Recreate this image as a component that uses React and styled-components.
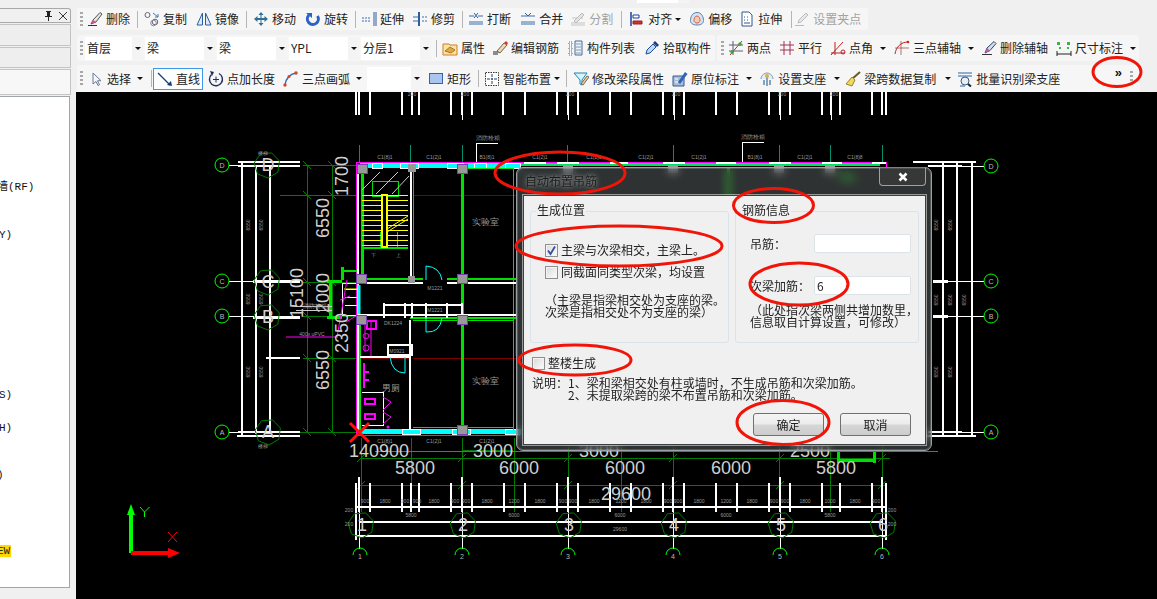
import React from 'react';
import styled, { createGlobalStyle } from 'styled-components';

const Global = createGlobalStyle`
  html, body { margin: 0; padding: 0; background: #f0f0f0; overflow: hidden; }
  * { box-sizing: border-box; }
`;
const FONT = `"Noto Sans CJK SC", "Liberation Sans", sans-serif`;

const Page = styled.div`
  position: relative; width: 1157px; height: 599px; display: flex; overflow: hidden;
  background: #f0f0f0; font: 12px/14px ${FONT}; color: #222;
`;

/* ---------- sidebar ---------- */
const Sidebar = styled.aside`
  width: 76px; flex: none; padding-top: 8px; display: flex; flex-direction: column;
`;
const PanelHeader = styled.div`
  width: 71px; height: 15px; border: 1px solid #a9a9a9; border-left: 0; border-radius: 0 3px 0 0;
  background: #f0f0f0; display: flex; align-items: center; justify-content: flex-end; gap: 6px; padding-right: 3px;
`;
const SideTab = styled.div`
  width: 71px; height: ${p => p.$h}px; margin-top: 1px; border: 1px solid #c4c4c4; border-left: 0;
  background: ${p => p.$light ? '#f7f7f7' : '#eeeeee'};
`;
const TreePanel = styled.div`
  width: 70px; flex: 1; margin-top: 1px; background: #fff; border: 1px solid #a0a5aa; border-left: 0; overflow: hidden;
`;
const TreeRow = styled.div`
  height: 16px; line-height: 16px; white-space: nowrap; margin-top: ${p => p.$gap}px; margin-left: ${p => p.$x}px;
  font: 11px/16px "Liberation Mono", "Noto Sans CJK SC", monospace; color: #111;
`;
const Mark = styled.span`background: #ffd800; color: #222; padding: 0 1px 0 0;`;
const SideFoot = styled.div`height: 11px; width: 71px;`;

/* ---------- toolbars ---------- */
const Main = styled.main`flex: 1; min-width: 0; display: flex; flex-direction: column;`;
const Toolbars = styled.div`height: 92px; flex: none; padding-left: 1px;`;
const TopStrip = styled.div`height: 8px; display: flex; padding-left: 560px;`;
const Stub = styled.div`width: 52px; height: 3px; background: #fff; border-right: 11px solid #f4f4f4;`;
const Line = styled.div`display: flex; gap: 2px; height: ${p => p.$h}px; margin-top: ${p => p.$t}px;`;
const Bar = styled.div`
  width: ${p => p.$w}px; height: 100%; flex: none; display: flex; align-items: center;
  background: #f6f6f6; border-radius: 3px; white-space: nowrap;
`;
const Grip = styled.i`
  display: block; flex: none; width: 3px; height: 15px; margin-left: ${p => p.$ml ?? 3}px;
  background: repeating-linear-gradient(to bottom, #a8a8a8 0 2px, transparent 2px 4px);
`;
const Tool = styled.div`
  display: flex; align-items: center; flex: none; gap: 3px; height: 22px;
  padding: 0 ${p => p.$active ? 3 : 5}px 0 4px; margin-left: ${p => p.$ml || 0}px;
  color: ${p => p.$off ? '#a2a2a2' : '#222'};
  ${p => p.$active && `background:#fbfdff; box-shadow: inset 0 0 0 1px #3e97ea;`}
`;
const Caret = styled.i`
  display: block; flex: none; width: 0; height: 0; margin-left: ${p => p.$cl || 0}px;
  border: 3px solid transparent; border-top: 3px solid #111; border-bottom: 0;
`;
const Sep = styled.i`
  display: block; flex: none; width: 1px; height: 17px; background: #b5b5b5;
  margin: 0 ${p => p.$mr ?? 2}px 0 ${p => p.$ml ?? 2}px;
`;
const Combo = styled.div`
  display: flex; align-items: center; justify-content: space-between; flex: none;
  width: ${p => p.$w}px; height: 23px; margin-left: ${p => p.$ml ?? 2}px; background: #fff; padding-left: 2px;
`;
const ComboArrow = styled.span`
  width: 11px; height: 100%; background: #f4f4f4; display: flex; align-items: center; justify-content: center;
`;
const More = styled.div`
  margin-left: auto; margin-right: 7px; display: flex; align-items: center; gap: 8px; height: 100%;
  font: bold 13px/13px "Liberation Sans", sans-serif; color: #111;
`;
const MoreGlyph = styled.span`margin-top: -13px;`;

/* ---------- canvas and dialog ---------- */
const Canvas = styled.div`position: relative; flex: 1; background: #000; overflow: hidden;`;
const CadSvg = styled.svg`display: block; width: 100%; height: 100%;`;

const Dialog = styled.section`
  position: absolute; left: 440px; top: 75px; width: 416px; height: 284px; padding: 0 5px 5px 6px;
  border: 1px solid #9aa1a5; border-radius: 7px;
  background: rgba(110, 120, 120, .42); backdrop-filter: blur(4px);
  box-shadow: inset 0 0 0 1px rgba(255,255,255,.18);
  display: flex; flex-direction: column;
`;
const TitleBar = styled.header`height: 27px; flex: none; display: flex; justify-content: space-between; padding-left: 2px;`;
const DialogTitle = styled.span`line-height: 26px; color: #1c1c1c; text-shadow: 0 0 6px rgba(255,255,255,.55), 0 0 3px rgba(255,255,255,.3);`;
const CloseBtn = styled.button`
  width: 47px; height: 19px; padding: 0; margin-top: -1px; border: 1px solid #9aa3a8; border-top-color: transparent;
  border-radius: 0 0 4px 4px; background: rgba(70,70,70,.35); display: flex; align-items: center; justify-content: center;
`;
const Client = styled.div`
  flex: 1; background: #f0f0f0; border: 1px solid #3c3f42; box-shadow: 0 0 0 1px rgba(255,255,255,.5);
  display: flex; flex-direction: column; color: #222;
`;
const Groups = styled.div`display: flex; gap: 6px; padding: 15px 0 0 6px;`;
const Group = styled.div`
  width: ${p => p.$w}px; height: 132px; border: 1px solid #dbe3ea; border-radius: 3px; flex: none;
`;
const GroupTitle = styled.div`
  width: fit-content; margin: -9px 0 0 5px; background: #f0f0f0; padding: 0 1px; font-size: 12px;
`;
const CheckRow = styled.label`
  display: flex; align-items: center; gap: 3px; height: 16px; padding-left: ${p => p.$l}px; margin-top: ${p => p.$t}px;
`;
const CheckBox = styled.span`
  width: 13px; height: 13px; flex: none; border: 1px solid #8e8f8f;
  background: linear-gradient(135deg, #d9d9d9, #fdfdfd); box-shadow: inset 0 0 0 1px #f4f4f4;
  display: flex; align-items: center; justify-content: center;
`;
const Note = styled.div`
  padding-left: ${p => p.$l}px; margin-top: ${p => p.$t}px; line-height: 12px; white-space: nowrap;
`;
const NoteLine = styled.div`padding-left: ${p => p.$l || 0}px;`;
const FieldRow = styled.div`
  display: flex; align-items: center; height: 19px; padding-left: 14px; margin-top: ${p => p.$t}px;
`;
const FieldLabel = styled.span`width: 64px; flex: none; white-space: nowrap;`;
const FieldInput = styled.input`
  width: 97px; height: 19px; flex: none; padding: 0 2px; border: 1px solid #dde4e8; border-radius: 2px; background: #fff;
  font: 12px ${FONT}; color: #222; outline: 0;
`;
const Buttons = styled.div`display: flex; justify-content: flex-end; gap: 16px; padding-right: 14px; margin-top: 12px;`;
const Btn = styled.button`
  width: 71px; height: 23px; padding: 0; border: 1px solid #707070; border-radius: 3px; color: #222;
  background: linear-gradient(#f4f4f4 0, #ececec 48%, #d6d6d6 52%, #cdcdcd 100%);
  font: 12px ${FONT};
`;
const Annotations = styled.svg`position: absolute; left: 0; top: 0; width: 1157px; height: 599px; pointer-events: none;`;

/* ---------- icons ---------- */
const icons = {
  del: <><path d="M1 14.5h9" stroke="#333" /><path d="M4 13 L6 9 L13 1.5 L15 3 L9 11z" fill="#e8e2d8" stroke="#555" /><path d="M4 13 L6 9 L9 11z" fill="#e24a9a" /></>,
  copy: <><circle cx="3.5" cy="4" r="2.5" fill="none" stroke="#667" /><circle cx="11" cy="11" r="2.8" fill="none" stroke="#667" /><circle cx="9.5" cy="12" r="2.8" fill="none" stroke="#889" /><path d="M9 2l5 4M14 3v3h-3" fill="none" stroke="#47a" /></>,
  mirror: <><path d="M1 14 L6.5 2v12z" fill="#dde9f6" stroke="#2b5f9c" /><path d="M15 14 L9.5 2v12z" fill="#dde9f6" stroke="#2b5f9c" /></>,
  move: <path d="M8 1l2.5 3h-2v3h3v-2L15 8l-3.500 3V9h-3v3h2L8 15l-2.500-3h2V9h-3v2L1 8l3.500-3v2h3V4h-2z" fill="#2e6f96" />,
  rotate: <><path d="M12.500 5A5.500 5.500 0 1 1 4 4" fill="none" stroke="#2a62c8" strokeWidth="3" /><path d="M1 2h6v5z" fill="#2a62c8" /></>,
  extend: <><path d="M1 7h9M1 10h9" stroke="#3a6fb0" strokeDasharray="2 1" /><path d="M13 1v14M15 1v14" stroke="#2f5f9a" /></>,
  trim: <><path d="M1 6h6M1 10h6" stroke="#3a6fb0" /><path d="M7 1v14" stroke="#2f5f9a" strokeWidth="2" /><path d="M10 6h5M10 10h5" stroke="#3a6fb0" strokeDasharray="2 1" /></>,
  brk: <><path d="M1 5h5M10 5h5M1 11h14M1 13h14" stroke="#3a6fb0" /><path d="M6 2l4 5M10 2L6 7" stroke="#2f5f9a" /></>,
  merge: <><path d="M1 5h14M1 11h14M1 13h14" stroke="#3a6fb0" /><path d="M5 2l3 3 3-3" fill="none" stroke="#2f5f9a" /></>,
  split: <><path d="M1 12h14M1 14h14M2 7h11" stroke="#c4c4c4" /><path d="M4 10l8-8 2 2-8 8z" fill="#e4e4e4" stroke="#bbb" /></>,
  align: <><path d="M2 1v14" stroke="#1a3f9c" strokeWidth="1.500" /><path d="M4 4h6v3H4z" fill="#fff" stroke="#1a3f9c" /><path d="M4 10h9v3H4z" fill="#c33" stroke="#922" /></>,
  offset: <><path d="M8 1.500c5 0 6.500 5 6.500 8 0 3-2.500 4.500-6.500 4.500s-6.500-1.500-6.500-4.500c0-3 1.500-8 6.500-8z" fill="#d6e4f2" stroke="#5a7ea8" /><path d="M8 5c2.500 0 3 3 3 4.500S9.500 12 8 12s-3-1-3-2.500S5.500 5 8 5z" fill="#f6c8b8" stroke="#c64" /></>,
  stretch: <><path d="M3 1h7l3 3v11H3z" fill="#fff" stroke="#35578f" /><path d="M5 6h1M8 6h1M5 9h1M8 9h1M5 12h6" stroke="#35578f" /></>,
  grip: <><path d="M1 14.500h9" stroke="#bbb" /><path d="M4 12l1-3 7-7 2 2-7 7z" fill="#e8e8e8" stroke="#bbb" /></>,
  attr: <><path d="M1 4h6l1 1h7v10H1z" fill="#fbe3a8" stroke="#d77a1e" /><path d="M3 11l5-4 5 3-4 3z" fill="#d9a94a" stroke="#a87a20" /></>,
  edit: <><path d="M1 12h7" stroke="#222" /><path d="M1 14h5" stroke="#222" /><path d="M5 11L12 3l3 2-7 8z" fill="#f0d8b0" stroke="#665" /><path d="M12 3l3 2 1-2-2-2z" fill="#d33" /></>,
  list: <><path d="M1 2h3v3H1zM1 7h3v3H1zM1 12h3v3H1z" fill="#fff" stroke="#566" strokeDasharray="1 1" /><path d="M7 1h7v14H7z" fill="#eef3fa" stroke="#4a6a92" /><path d="M8 4h5M8 7h5M8 10h5M8 13h5" stroke="#7f9ab8" /></>,
  pick: <><path d="M2 14l1-4 6-6 3 3-6 6z" fill="#bcd8f4" stroke="#1a4fa0" /><path d="M9 3l2-2 4 4-2 2z" fill="#1a3f8c" /></>,
  two: <><path d="M1 5h14M1 11h14M5 1v14" stroke="#5b5b78" /><path d="M2 15L14 1" stroke="#b03030" /><circle cx="4" cy="12" r="1.700" fill="#3a3" /><circle cx="12" cy="4" r="1.700" fill="#3a3" /></>,
  par: <path d="M1 5h14M1 10h14M5 1v14M11 1v14" stroke="#a03050" />,
  ang: <><path d="M1 13h14M5 2v13M1 15L13 2" stroke="#c02020" /><circle cx="13" cy="12" r="2" fill="none" stroke="#c02020" /></>,
  tri: <><path d="M1 14C2 7 7 2 14 2" fill="none" stroke="#c02020" /><path d="M7 1v14M1 8h14" stroke="#9a3a3a" strokeWidth=".700" /><circle cx="14" cy="2" r="1.300" fill="#c22" /></>,
  delx: <><path d="M1 14.500h10" stroke="#333" /><path d="M4 13l2-5 7-6.500 2 2-6 7z" fill="#cfdff0" stroke="#345" /><path d="M4 13l2-5 3 2.500z" fill="#c85bb0" /></>,
  dim: <><path d="M1 2h3v3H1zM11 2h3v3h-3z" fill="#3bb24a" /><path d="M1 14h14M1 11v5M15 11v5" stroke="#222" /><path d="M3 8h2M11 8h2" stroke="#3bb24a" strokeWidth="2" /></>,
  sel: <path d="M5 2v11l3-2.500 2 4 1.500-.8-2-4H13z" fill="#f4f6fa" stroke="#6b7b90" />,
  line: <><path d="M1 2l12 12" stroke="#143a7a" strokeWidth="1.300" /><path d="M15 15l-5-1 4-4z" fill="#143a7a" /></>,
  plen: <><path d="M11 2.500A6.500 6.500 0 1 1 3.500 3.500" fill="none" stroke="#1a2f5c" strokeWidth="1.400" /><path d="M2 0l4 1-2 4z" fill="#1a2f5c" /><path d="M8 5.500v6M5 8.500h6" stroke="#1a2f5c" /></>,
  arc: <><path d="M2 14C3 7 7 3 13 2" fill="none" stroke="#2a6ab0" strokeWidth="1.300" /><circle cx="2" cy="14" r="1.700" fill="#d8442c" /><circle cx="6" cy="5.500" r="1.500" fill="#d8442c" /><circle cx="13" cy="2" r="1.700" fill="#d8442c" /></>,
  rect: <rect x="1.500" y="2.500" width="13" height="10" fill="#a8c6f0" stroke="#3a62a8" />,
  smart: <><path d="M1.500 1.500h13v13h-13z" fill="#fff" stroke="#333" strokeDasharray="1.500 1" /><path d="M8 3v3M8 10v3M3 8h3M10 8h3" stroke="#1e3c6e" /><circle cx="8" cy="8" r="1" fill="#1e3c6e" /></>,
  mod: <><path d="M1 2h13L9 9v5l-2-1V9z" fill="#d8f2fa" stroke="#1c88b4" /><path d="M8 13l6-8 2 1-6 8z" fill="#f2d084" stroke="#765" /></>,
  orig: <><path d="M1 5h11v10H1z" fill="#a9bcd8" stroke="#37598f" /><path d="M6 11L13 1l2.500 2L8 13z" fill="#2f64b8" /><path d="M3 8h3M3 11h3" stroke="#fff" /></>,
  sup: <><path d="M2 8c0-4 4-6 6-6s6 2 6 6" fill="#e4ecf4" stroke="#7a94b0" /><path d="M8 4v11M5 9v5M11 9v5" stroke="#5b88b0" strokeWidth="1.500" /><circle cx="8" cy="5" r="2" fill="#d9b04a" /></>,
  beam: <><path d="M15 1L7 8" stroke="#6a5a2a" strokeWidth="2" /><path d="M7 6l3 3-3 6-6-2z" fill="#f0d860" stroke="#9a8428" /></>,
  batch: <><path d="M1 2h14M1 5h14" stroke="#2a62a8" /><circle cx="8" cy="10" r="4" fill="#e8eef4" stroke="#3a5a7a" /><path d="M11 13l3 2.500" stroke="#222" strokeWidth="2" /><path d="M3 15h5" stroke="#2a62a8" /></>,
};
const IconSvg = styled.svg`flex: none;`;
const ToolIcon = ({ n }) => (
  <IconSvg width="16" height="16" viewBox="0 0 16 16" strokeWidth="1">{icons[n]}</IconSvg>
);

const Item = ({ i, t, ml, car, cl, off, active }) => (
  <Tool $ml={ml} $off={off} $active={active}>
    <ToolIcon n={i} />
    <span>{t}</span>
    {car && <Caret $cl={cl} />}
  </Tool>
);
const ComboBox = ({ w, ml, t }) => (
  <Combo $w={w} $ml={ml}>
    <span>{t}</span>
    <ComboArrow><Caret /></ComboArrow>
  </Combo>
);

/* ---------- CAD drawing ---------- */
const poly = (cx, cy, r, n = 7) =>
  Array.from({ length: n }, (_, k) => {
    const a = (k / n) * Math.PI * 2 - 1.2;
    return `${(cx + Math.cos(a) * r).toFixed(1)},${(cy + Math.sin(a) * r).toFixed(1)}`;
  }).join(' ');
const axesX = [361, 462, 568, 673, 780, 882];
const tickX = [356, 370, 402, 411, 419, 451, 472, 504, 525, 557, 578, 610, 631, 663, 684, 716, 737, 769, 790, 822, 840, 872, 886];
const topTicks = [356, 359, 370, 402, 412, 419, 451, 462, 472, 503, 525, 557, 568, 578, 610, 631, 663, 674, 684, 716, 737, 769, 780, 790, 822, 831, 840, 872, 882, 886];
const rows = [195, 200, 205, 210, 215, 220, 225, 230, 235, 240, 245];
const dimTicks = [];
[307, 332].forEach(x => [165, 195, 282, 316, 358, 432].forEach(y => dimTicks.push(`M${x - 4} ${y - 4}l8 8`)));
axesX.forEach(x => [458, 485].forEach(y => dimTicks.push(`M${x - 4} ${y + 4}l8 -8`)));

const Big = ({ x, y, r, children }) => (
  <text x={x} y={y} transform={r ? `rotate(-90 ${x} ${y})` : undefined} textAnchor="middle"
    fontFamily="Liberation Sans" fontSize="18" fill="#cfcfcf">{children}</text>
);
const Tiny = ({ x, y, r, children, s = 5 }) => (
  <text x={x} y={y} transform={r ? `rotate(-90 ${x} ${y})` : undefined} textAnchor="middle"
    fontFamily="Liberation Sans" fontSize={s} fill="#9a9a9a">{children}</text>
);
const Bubble = ({ x, y, t }) => (
  <>
    <circle cx={x} cy={y} r="7" fill="none" stroke="#00ff00" />
    <text x={x} y={y + 2.500} textAnchor="middle" fontFamily="Liberation Sans" fontSize="7" fill="#bbb">{t}</text>
  </>
);

const Cad = () => (
  <CadSvg viewBox="76 92 1081 507" preserveAspectRatio="none">
    <g fill="none">
      <g stroke="#007a00" shapeRendering="crispEdges">
        <path d="M307 165V432M332 165V432M303 165H356M280 195H359M303 282H356M303 316H356M303 358H356M300 432H356" />
        <path d="M360 458H890M360 485H886M462 450H513" />
        {[361, 411, 462, 514, 568, 621, 673, 779, 830, 882].map(x => <path key={x} d={`M${x} 438V512`} />)}
      </g>
      <path d={dimTicks.join('')} stroke="#007a00" />
      <path d="M413 195H516M413 358H516M410 320V358M515 285V356M359 358H410M520 358H930" stroke="#800000" shapeRendering="crispEdges" />
      <path d={[359, 410, 462, 567, 673, 779, 830, 882].map(x => `M${x} 145V162`).join('')} stroke="#009070" shapeRendering="crispEdges" />

      <g stroke="#fff" shapeRendering="crispEdges">
        <path d="M229 165H238M229 281H253M229 316H253M229 432H238M948 281H984M948 316H984M962 166H984M962 432H984" />
        <path strokeWidth="2" d="M238 162H300M238 166H300M238 432H300M237 436H300M242 162V436M256 165V434M270 165V434M266 358H300" />
        <path strokeWidth="3" d="M253 281H300M253 317H300M933 281H948M933 316H948" />
        <path strokeWidth="2" d="M913 162H976M928 166H962M913 436H976M928 432H962M943 162V436M957 162V436M972 162V436" />
        <path strokeWidth="2" d={topTicks.map(x => `M${x} 92V115`).join('')} />
        <path d={[462, 568, 674, 780, 831].map(x => `M${x} 115V120`).join('')} />
        <path strokeWidth="2" d={tickX.map(x => `M${x} 483V512`).join('')} />
        <path strokeWidth="2" d={axesX.map(x => `M${x === 361 ? 359 : x} 477V512`).join('')} />
        <path d={axesX.map(x => `M${x === 361 ? 359 : x} 512V549`).join('')} />
        <path strokeWidth="2" d="M356 507H886M359 522H882M356 536H886M356 483V540M886 483V540" />
        <path d="M476 143H498M476 143V165M742 142H764M742 142V165" />
      </g>
      {[[267, 165], [267, 282], [267, 317], [268, 432], ...axesX.map(x => [x === 361 ? 361 : x + 1, 525])].map(([x, y]) => (
        <polygon key={`${x}-${y}`} points={poly(x, y, 13)} stroke="#007a00" />
      ))}

      <path d="M356 162H886V167M356 162V435H520M375 451H938" stroke="#ff00ff" shapeRendering="crispEdges" />
      <path d="M360 165.500H520M360 431.500H520" stroke="#00ffff" strokeWidth="5" shapeRendering="crispEdges" />
      <path d="M520 164.500H880" stroke="#00e060" strokeWidth="3" shapeRendering="crispEdges" />
      <g stroke="#fff" strokeWidth="1" shapeRendering="crispEdges">
        <path d="M372 163h10v5h-10zM400 163h18v5h-18zM447 163h16v5h-16zM474 163h12v5h-12zM505 163h15v5h-15z" />
        <path d="M402 429h18v5h-18zM452 429h18v5h-18zM505 429h15v5h-15z" />
      </g>
      <path strokeWidth="2" stroke="#fff" d="M524 163h22M557 163h22M610 163h18M663 163h22M716 163h20M769 163h22M822 163h20M872 163h14" shapeRendering="crispEdges" />

      <g stroke="#00e000" shapeRendering="crispEdges">
        <path strokeWidth="3" d="M362 168V278M462 168V430M728 168V430" />
        <path strokeWidth="2" d="M363 279H423M447 279H516M410 318H457M468 318H516M362 248H408" />
        <path d="M513 168V430M464 168H513M413 168V278M413 320H513M413 427H513M372 181H398V196H372zM380 248V232M397 248V232" />
        <path d="M360 320V430" strokeWidth="2" />
        <path strokeWidth="3" d="M330 280V318M327 281H342M327 317H342M342 267V280" />
        <path strokeWidth="2" d="M342 271H358" />
        <path strokeWidth="3" d="M838 452V463M838 460H875M874 452V463" />
      </g>
      <g stroke="#fff" shapeRendering="crispEdges">
        <path strokeWidth="2" d="M358 165V432M411 168V278M363 283H423M447 283H516M358 315H516M360 357H410M410 320V430" />
        <path d="M342 283H358V315H342zM345 289H358M345 297H358M345 305H358M362 392H383V425H362" />
        <path strokeWidth="2" d="M383 305H462M384 303V318M405 303V318M412 303V318M426 303V318M447 303V318M462 303V318M388 345H412V355H388z" />
        <path d="M296 310H332M296 306H332" stroke="#ccc" />
      </g>
      <path d="M362 190l18-18M376 194l22-22M392 194l17-18" stroke="#ccc" />
      <path d="M359 285V314" stroke="#00ffff" strokeWidth="3" />

      <path d={rows.map(y => `M362 ${y}H408`).join('')} stroke="#ffff00" shapeRendering="crispEdges" />
      <path d="M382 195V247H387V195z" stroke="#ffff00" strokeWidth="2" fill="#000" />
      <path d="M387 232l21-13M387 229l21-13M344 289H358" stroke="#ffff00" />

      <path d="M426 280V266Q440 267 442 280M426 317V332Q440 333 442 318M390 357Q392 373 405 373V357" stroke="#00ffff" />
      <g stroke="#ff00ff">
        <path d="M347 280L337 337M340 300l10 -4M286 337H338M346 322L356 316" />
        <rect x="367" y="321" width="9" height="8" strokeWidth="2" />
        <path d="M371 322V356M365 325V352" />
        <ellipse cx="366" cy="336" rx="3" ry="2.500" /><ellipse cx="366" cy="348" rx="3" ry="3" />
        <path d="M364 363V388M364 372h5M364 380h5" strokeWidth="2" />
        <rect x="365" y="399" width="10" height="5" strokeWidth="2" /><rect x="365" y="414" width="10" height="5" strokeWidth="2" />
        <path d="M383 397L391 402L383 410M383 412L391 417L383 424" />
      </g>
      <circle cx="388" cy="427" r="1.500" fill="#ff00ff" stroke="none" />

      <g stroke="#7a3fb0" fill="#999" shapeRendering="crispEdges">
        <rect x="357" y="164" width="10" height="9" /><rect x="457" y="164" width="10" height="9" />
        <rect x="356" y="274" width="10" height="9" /><rect x="457" y="274" width="10" height="9" />
        <rect x="356" y="315" width="10" height="9" /><rect x="457" y="315" width="10" height="9" />
        <rect x="457" y="425" width="10" height="9" />
      </g>
      <g fill="#999" shapeRendering="crispEdges">
        <rect x="408" y="164" width="8" height="8" /><rect x="408" y="276" width="7" height="7" />
        <rect x="563" y="165" width="10" height="8" /><rect x="668" y="165" width="10" height="8" /><rect x="774" y="165" width="10" height="8" /><rect x="825" y="165" width="10" height="8" />
        <rect x="668" y="280" width="10" height="8" /><rect x="728" y="280" width="4" height="8" />
      </g>
      <path d="M840 172l12 8M846 172l12 8M836 178l16 4" stroke="#008a00" strokeWidth="2" />

      {axesX.map((x, k) => (
        <path key={x} d={`M${(k ? x : 360) - 7} 555A7 7 0 0 1 ${(k ? x : 360) + 7} 555`} stroke="#00ff00" />
      ))}
      <path d="M131 553V510" stroke="#00ff00" strokeWidth="4" />
      <path d="M131 504l4 11h-8z" fill="#00ff00" />
      <path d="M131 553H170" stroke="#ff0000" strokeWidth="4" />
      <path d="M180 553l-12 -5v10z" fill="#ff0000" />
      <path d="M140 507l4.500 5 5 -5M144.500 512v5" stroke="#00ff00" />
      <path d="M168 532l9 10M177 532l-9 10" stroke="#ff0000" />
      <path d="M350 423l19 19M369 423l-19 19" stroke="#ff1010" strokeWidth="3" />
    </g>

    <Bubble x={222} y={165} t="D" /><Bubble x={222} y={281} t="C" /><Bubble x={222} y={316} t="B" /><Bubble x={222} y={432} t="A" />
    <Bubble x={991} y={166} t="D" /><Bubble x={991} y={281} t="C" /><Bubble x={991} y={316} t="B" /><Bubble x={991} y={432} t="A" />
    {['1', '2', '3', '4', '5', '6'].map((t, k) => (
      <text key={t} x={axesX[k] - (k ? 0 : 1)} y="559" textAnchor="middle" fontFamily="Liberation Sans" fontSize="7" fill="#bbb">{t}</text>
    ))}
    {['D', 'C', 'B', 'A'].map((t, k) => <Big key={t} x={268} y={[171, 288, 323, 438][k]}>{t}</Big>)}
    {['1', '2', '3', '4', '5', '6'].map((t, k) => <Big key={t} x={axesX[k] + 1} y={531}>{t}</Big>)}

    <Big x={348} y={176} r>1700</Big><Big x={329} y={218} r>6550</Big><Big x={329} y={293} r>2000</Big>
    <Big x={303} y={293} r>15100</Big><Big x={348} y={333} r>2350</Big><Big x={329} y={370} r>6550</Big>
    <Big x={379} y={457}>140900</Big><Big x={493} y={457}>3000</Big><Big x={599} y={457}>3000</Big><Big x={810} y={457}>2500</Big>
    {[[415, '5800'], [519, '6000'], [625, '6000'], [731, '6000'], [836, '5800']].map(([x, t]) => <Big key={x} x={x} y={474}>{t}</Big>)}
    <Big x={626} y={500}>29600</Big>

    <Tiny x={485} y={225} s={9}>实验室</Tiny><Tiny x={485} y={384} s={9}>实验室</Tiny>
    <Tiny x={391} y={391} s={9}>男厕</Tiny>
    <Tiny x={373} y={257} s={5}>下</Tiny><Tiny x={398} y={257} s={5}>上</Tiny>
    <Tiny x={488} y={140} s={6}>消防栓箱</Tiny><Tiny x={753} y={139} s={6}>消防栓箱</Tiny>
    <Tiny x={315} y={308} s={6}>消防栓箱</Tiny><Tiny x={312} y={336} s={5}>400x uPVC</Tiny>
    <Tiny x={435} y={290} s={5}>M1221</Tiny><Tiny x={435} y={312} s={5}>M1221</Tiny>
    <Tiny x={393} y={325} s={5}>DK1224</Tiny><Tiny x={397} y={353} s={5}>M0921</Tiny>
    {[[385, 'C1(8)1'], [434, 'C1(2)1'], [487, 'B1(8)1'], [540, 'C1(2)1'], [594, 'C1(2)1'], [646, 'C1(2)1'], [699, 'C1(2)1'], [755, 'B1(8)1'], [805, 'C1(2)1'], [855, 'C1(8)8']].map(([x, t]) => (
      <Tiny key={x} x={x} y={159}>{t}</Tiny>
    ))}
    {[[385, 'C1(8)1'], [434, 'C1(2)1'], [487, 'C1(2)1']].map(([x, t]) => <Tiny key={x} x={x} y={443}>{t}</Tiny>)}
    {[[365, '900'], [385, '1800'], [405, '900'], [417, '900'], [434, '1800'], [455, '900'], [466, '900'], [487, '1800'], [514, '1200'], [540, '1800'], [563, '900'], [573, '900'], [594, '1800'], [621, '1200'], [646, '1800'], [668, '900'], [678, '900'], [699, '1800'], [726, '1200'], [752, '1800'], [774, '900'], [785, '900'], [805, '1800'], [830, '1000'], [855, '1800'], [876, '900']].map(([x, t]) => (
      <Tiny key={x} x={x} y={503}>{t}</Tiny>
    ))}
    {[[411, '5800'], [514, '6000'], [620, '6000'], [726, '6000'], [830, '5800']].map(([x, t]) => <Tiny key={x} x={x} y={517}>{t}</Tiny>)}
    <Tiny x={620} y={531}>29600</Tiny>
    <Tiny x={349} y={512}>200</Tiny><Tiny x={349} y={526}>200</Tiny><Tiny x={892} y={512}>200</Tiny><Tiny x={892} y={526}>200</Tiny>
    {[412, 465, 570, 676, 782, 834].map(x => <Tiny key={x} x={x} y={96}>200</Tiny>)}
    {[[250, 225], [263, 225], [250, 299], [263, 299], [250, 372], [263, 372]].map(([x, y]) => <Tiny key={`${x}${y}`} x={x} y={y} r>6550</Tiny>)}
    {[[938, 225], [952, 225], [938, 300], [952, 300], [966, 300], [938, 372], [952, 372]].map(([x, y]) => <Tiny key={`${x}${y}`} x={x} y={y} r>6550</Tiny>)}
    <Tiny x={263} y={155}>楼梯</Tiny><Tiny x={263} y={448}>楼梯</Tiny>
  </CadSvg>
);

const Check = () => (
  <svg width="11" height="11" viewBox="0 0 11 11"><path d="M2 5.500L4.500 9 9 1.500" fill="none" stroke="#3a4f9a" strokeWidth="1.800" /></svg>
);

export default function App() {
  return (
    <Page>
      <Global />
      <Sidebar>
        <PanelHeader>
          <svg width="9" height="10" viewBox="0 0 9 10"><path d="M2 0h5v1H6v4h2v1H5v4H4V6H1V5h2V1H2z" fill="#222" /></svg>
          <svg width="8" height="8" viewBox="0 0 8 8"><path d="M0 0l8 8M8 0L0 8" stroke="#333" /></svg>
        </PanelHeader>
        <SideTab $h={22} />
        <SideTab $h={21} />
        <SideTab $h={26} $light />
        <TreePanel>
          <TreeRow $gap={82} $x={-3}>墙(RF)</TreeRow>
          <TreeRow $gap={32} $x={-1}>Y)</TreeRow>
          <TreeRow $gap={144} $x={-1}>S)</TreeRow>
          <TreeRow $gap={17} $x={-1}>H)</TreeRow>
          <TreeRow $gap={31} $x={-3}>)</TreeRow>
          <TreeRow $gap={60} $x={-3}><Mark>EW</Mark></TreeRow>
        </TreePanel>
        <SideFoot />
      </Sidebar>

      <Main>
        <Toolbars>
          <TopStrip><Stub /></TopStrip>
          <Line $h={22} $t={0}>
            <Bar $w={791}>
              <Grip />
              <Item i="del" t="删除" /><Sep />
              <Item i="copy" t="复制" /><Item i="mirror" t="镜像" /><Sep />
              <Item i="move" t="移动" /><Item i="rotate" t="旋转" /><Sep />
              <Item i="extend" t="延伸" ml={-1} /><Item i="trim" t="修剪" ml={-1} /><Sep />
              <Item i="brk" t="打断" ml={-1} /><Item i="merge" t="合并" /><Item i="split" t="分割" ml={-2} off /><Sep $ml={3} />
              <Item i="align" t="对齐" ml={1} car /><Item i="offset" t="偏移" ml={-1} /><Item i="stretch" t="拉伸" ml={-2} /><Sep $ml={4} />
              <Item i="grip" t="设置夹点" ml={-4} off />
            </Bar>
          </Line>
          <Line $h={26} $t={5}>
            <Bar $w={638}>
              <Grip />
              <ComboBox w={58} t="首层" /><ComboBox w={70} t="梁" /><ComboBox w={70} t="梁" /><ComboBox w={70} t="YPL" /><ComboBox w={70} t="分层1" />
              <Sep $ml={5} />
              <Item i="attr" t="属性" ml={-1} /><Item i="edit" t="编辑钢筋" ml={-2} /><Item i="list" t="构件列表" /><Item i="pick" t="拾取构件" />
            </Bar>
            <Bar $w={422}>
              <Grip $ml={4} />
              <Item i="two" t="两点" /><Item i="par" t="平行" ml={-1} /><Item i="ang" t="点角" ml={-1} car cl={4} />
              <Item i="tri" t="三点辅轴" ml={-1} car cl={4} /><Item i="delx" t="删除辅轴" ml={-2} /><Item i="dim" t="尺寸标注" ml={-1} car cl={4} />
            </Bar>
          </Line>
          <Line $h={27} $t={4}>
            <Bar $w={1063}>
              <Grip />
              <Item i="sel" t="选择" ml={1} car cl={3} /><Sep $ml={3} />
              <Item i="line" t="直线" ml={-1} active /><Item i="plen" t="点加长度" ml={1} />
              <Item i="arc" t="三点画弧" ml={-1} car cl={3} />
              <ComboBox w={55} ml={0} t="" />
              <Item i="rect" t="矩形" ml={2} /><Sep />
              <Item i="smart" t="智能布置" ml={-1} car /><Sep $ml={1} />
              <Item i="mod" t="修改梁段属性" /><Item i="orig" t="原位标注" ml={-1} car cl={4} />
              <Item i="sup" t="设置支座" ml={-2} car cl={5} /><Item i="beam" t="梁跨数据复制" ml={-4} car cl={6} />
              <Item i="batch" t="批量识别梁支座" ml={-3} />
              <More><MoreGlyph>»</MoreGlyph><Grip $ml={0} /></More>
            </Bar>
          </Line>
        </Toolbars>

        <Canvas>
          <Cad />
          <Dialog>
            <TitleBar>
              <DialogTitle>自动布置吊筋</DialogTitle>
              <CloseBtn aria-label="关闭">
                <svg width="10" height="10" viewBox="0 0 10 10"><path d="M1.500 1.500l7 7M8.500 1.500l-7 7" stroke="#fff" strokeWidth="2.600" /></svg>
              </CloseBtn>
            </TitleBar>
            <Client>
              <Groups>
                <Group $w={199}>
                  <GroupTitle>生成位置</GroupTitle>
                  <CheckRow $l={14} $t={25}><CheckBox><Check /></CheckBox>主梁与次梁相交，主梁上。</CheckRow>
                  <CheckRow $l={14} $t={6}><CheckBox />同截面同类型次梁，均设置</CheckRow>
                  <Note $l={14} $t={14}>
                    <NoteLine>（主梁是指梁相交处为支座的梁。</NoteLine>
                    <NoteLine>次梁是指相交处不为支座的梁）</NoteLine>
                  </Note>
                </Group>
                <Group $w={184}>
                  <GroupTitle>钢筋信息</GroupTitle>
                  <FieldRow $t={17}><FieldLabel>吊筋：</FieldLabel><FieldInput readOnly value="" /></FieldRow>
                  <FieldRow $t={23}><FieldLabel>次梁加筋：</FieldLabel><FieldInput readOnly value="6" /></FieldRow>
                  <Note $l={14} $t={9}>
                    <NoteLine>（此处指次梁两侧共增加数里，</NoteLine>
                    <NoteLine>信息取自计算设置，可修改）</NoteLine>
                  </Note>
                </Group>
              </Groups>
              <CheckRow $l={8} $t={12}><CheckBox />整楼生成</CheckRow>
              <Note $l={8} $t={6}>
                <NoteLine>说明：1、梁和梁相交处有柱或墙时，不生成吊筋和次梁加筋。</NoteLine>
                <NoteLine $l={36}>2、未提取梁跨的梁不布置吊筋和次梁加筋。</NoteLine>
              </Note>
              <Buttons><Btn>确定</Btn><Btn>取消</Btn></Buttons>
            </Client>
          </Dialog>
        </Canvas>
      </Main>

      <Annotations viewBox="0 0 1157 599" fill="none" stroke="#f01508" strokeWidth="3">
        <ellipse cx="1117" cy="72" rx="24" ry="14.500" />
        <ellipse cx="560" cy="173" rx="65" ry="21" />
        <ellipse cx="773.500" cy="205.500" rx="40" ry="17" />
        <ellipse cx="619" cy="246" rx="103" ry="20" />
        <ellipse cx="799" cy="284" rx="49" ry="21" />
        <ellipse cx="575" cy="360" rx="56" ry="15" />
        <ellipse cx="783" cy="422.500" rx="46" ry="22" />
      </Annotations>
    </Page>
  );
}
